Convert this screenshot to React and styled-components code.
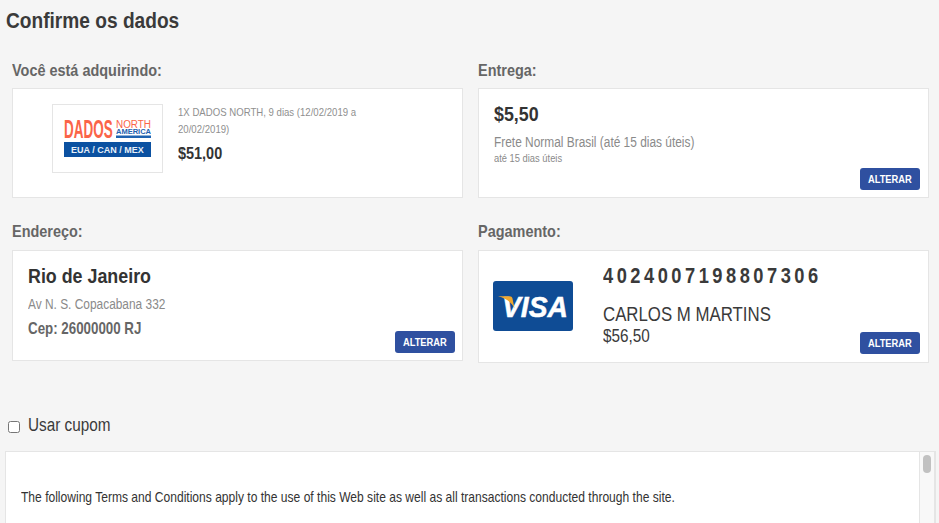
import styled, { createGlobalStyle, css } from "styled-components";

// the original condensed face is not installed, so Liberation Sans gets squeezed
const narrow = css`
    width: max-content;
    white-space: nowrap;
    transform: scaleX(0.85);
    transform-origin: 0 50%;
`

const GlobalStyle = createGlobalStyle`
    html, body {
        margin: 0;
        height: 100%;
        overflow: hidden;
        background: #f5f5f5;
    }

    body {
        font-family: "Liberation Sans", Arial, sans-serif;
        color: #333;
    }

    * {
        box-sizing: border-box;
    }
`

const Page = styled.div`
    height: 523px;
    overflow: hidden;
`

const TitleRow = styled.div`
    height: 53px;
    padding: 8px 0 0 6px;
`

const Title = styled.h1`
    ${narrow}
    margin: 0;
    font-size: 22.5px;
    line-height: 26px;
    font-weight: 700;
    color: #3a3a3a;
`

const Grid = styled.div`
    display: grid;
    grid-template-columns: 451px 451px;
    column-gap: 15px;
    align-items: start;
    padding-left: 12px;
`

const Section = styled.section`
    display: flex;
    flex-direction: column;
`

const LabelRow = styled.div`
    flex: none;
    height: ${props => props.$height}px;
    padding-top: ${props => props.$top}px;
`

const Label = styled.h2`
    ${narrow}
    margin: 0;
    font-size: 17px;
    line-height: 20px;
    font-weight: 700;
    color: #666;
`

const Card = styled.div`
    position: relative;
    flex: none;
    display: flex;
    height: ${props => props.$height}px;
    background: #fff;
    border: 1px solid #e5e5e5;
`

const ProductCard = styled(Card)`
    padding: 15px 0 0 39px;
`

const LogoBox = styled.div`
    flex: none;
    display: flex;
    align-items: center;
    justify-content: center;
    width: 111px;
    height: 69px;
    background: #fff;
    border: 1px solid #e5e5e5;
`

const ProductInfo = styled.div`
    width: 190px;
    margin-left: 15px;
`

const ProductName = styled.p`
    ${narrow}
    width: calc(100% / 0.85);
    white-space: normal;
    margin: 0;
    font-size: 11.3px;
    line-height: 17px;
    color: #8f8f8f;
`

const ProductPrice = styled.p`
    ${narrow}
    margin: 6px 0 0;
    font-size: 17px;
    line-height: 20px;
    font-weight: 700;
    color: #333;
`

const Details = styled.div`
    display: flex;
    flex-direction: column;
    padding: ${props => props.$top}px 0 0 15px;
`

const Heading = styled.h3`
    ${narrow}
    margin: 0;
    font-size: ${props => props.$size}px;
    line-height: 26px;
    font-weight: 700;
    color: #333;
`

const Muted = styled.p`
    ${narrow}
    margin: ${props => props.$top || 0}px 0 0;
    font-size: ${props => props.$size}px;
    line-height: ${props => props.$line}px;
    color: #8a8a8a;
`

const Zip = styled.p`
    ${narrow}
    margin: 6px 0 0;
    font-size: 15.7px;
    line-height: 20px;
    font-weight: 700;
    color: #666;
`

const ChangeButton = styled.button`
    position: absolute;
    right: ${props => props.$right || 8}px;
    bottom: ${props => props.$bottom || 7}px;
    display: flex;
    align-items: center;
    justify-content: center;
    width: 60px;
    height: 22px;
    padding: 0;
    border: 0;
    border-radius: 3px;
    background: #2f50a0;
    color: #fff;
    font-family: inherit;
    font-size: 11px;
    font-weight: 700;
`

const ChangeLabel = styled.span`
    ${narrow}
    transform-origin: 50% 50%;
`

const VisaCard = styled.div`
    flex: none;
    align-self: flex-start;
    width: 80px;
    height: 50px;
    margin: 30px 0 0 14px;
    border-radius: 3px;
    background: #0f4c95;
`

const PaymentInfo = styled.div`
    margin-left: 30px;
    padding-top: 12px;
`

const CardNumber = styled.p`
    ${narrow}
    margin: 0;
    font-size: 21.5px;
    line-height: 26px;
    font-weight: 700;
    letter-spacing: 4.12px;
    color: #3a3a3a;
`

const Holder = styled.p`
    ${narrow}
    margin: 14px 0 0;
    font-size: 19.8px;
    line-height: 22px;
    color: #3a3a3a;
`

const Amount = styled.p`
    ${narrow}
    margin: 1px 0 0;
    font-size: 18px;
    line-height: 21px;
    color: #3a3a3a;
`

const CouponRow = styled.label`
    display: flex;
    align-items: center;
    height: 26px;
    margin-top: 49px;
    padding-left: 8px;
    font-size: 18px;
    color: #3a3a3a;
`

const CouponText = styled.span`
    ${narrow}
`

const CouponCheck = styled.input`
    width: 12px;
    height: 12px;
    margin: 3px 8px 0 0;
`

const TermsBox = styled.div`
    display: flex;
    width: 931px;
    height: 120px;
    margin: 13px 0 0 5px;
    background: #fff;
    border: 1px solid #e5e5e5;
`

const TermsText = styled.div`
    flex: 1;
    padding: 35px 15px 0;
    overflow: hidden;
`

const TermsLine = styled.p`
    ${narrow}
    margin: 0;
    font-size: 14.2px;
    line-height: 20px;
    color: #333;
`

const TermsBar = styled.div`
    flex: none;
    width: 16px;
    padding: 3px 3px 0 3px;
    background: #f8f8f8;
    border-left: 1px solid #e5e5e5;
    border-right: 1px solid #e5e5e5;
`

const TermsThumb = styled.div`
    width: 8px;
    height: 18px;
    border-radius: 4px;
    background: #c1c1c1;
`

const DadosLogo = () => (
    <svg width="87" height="47" viewBox="0 -4 87 47" fontFamily="Liberation Sans, sans-serif">
        <text transform="translate(0 19) scale(0.54 1)" fontSize="25" fontWeight="700" fill="#fb6448">DADOS</text>
        <text transform="translate(52 8.5) scale(0.9 1)" fontSize="11" fill="#fb6448">NORTH</text>
        <text transform="translate(52 15) scale(0.94 1)" fontSize="8" fontWeight="700" fill="#1f62b0">AMERICA</text>
        <rect x="52" y="16.5" width="35" height="2.5" fill="#1f62b0" />
        <rect x="0" y="23" width="87" height="15" fill="#0b51a1" />
        <text x="7" y="34" fontSize="9" fontWeight="700" fill="#e8f0f8">EUA / CAN / MEX</text>
    </svg>
)

const VisaLogo = () => (
    <svg width="80" height="50" viewBox="0 0 80 50">
        <text x="9" y="36" fontFamily="Liberation Sans, sans-serif" fontSize="29" fontWeight="700" fontStyle="italic" stroke="#fff" strokeWidth="0.5" fill="#fff" textLength="66" lengthAdjust="spacingAndGlyphs">VISA</text>
        <path d="M5 15.3h11.5c1.6 0 2.6.8 3 2.2l2 10C19 21.5 13 17.3 5 15.3z" fill="#f0a830" />
    </svg>
)

const App = () => {
    return (
        <Page>
            <GlobalStyle />
            <TitleRow>
                <Title>Confirme os dados</Title>
            </TitleRow>
            <Grid>
                <Section>
                    <LabelRow $height="35" $top="8">
                        <Label>Você está adquirindo:</Label>
                    </LabelRow>
                    <ProductCard $height="110">
                        <LogoBox>
                            <DadosLogo />
                        </LogoBox>
                        <ProductInfo>
                            <ProductName>1X DADOS NORTH, 9 dias (12/02/2019 a 20/02/2019)</ProductName>
                            <ProductPrice>$51,00</ProductPrice>
                        </ProductInfo>
                    </ProductCard>
                </Section>
                <Section>
                    <LabelRow $height="35" $top="8">
                        <Label>Entrega:</Label>
                    </LabelRow>
                    <Card $height="110">
                        <Details $top="12">
                            <Heading $size="21">$5,50</Heading>
                            <Muted $size="14" $line="16" $top="7">Frete Normal Brasil (até 15 dias úteis)</Muted>
                            <Muted $size="11" $line="16">até 15 dias úteis</Muted>
                        </Details>
                        <ChangeButton><ChangeLabel>ALTERAR</ChangeLabel></ChangeButton>
                    </Card>
                </Section>
                <Section>
                    <LabelRow $height="52" $top="24">
                        <Label>Endereço:</Label>
                    </LabelRow>
                    <Card $height="111">
                        <Details $top="12">
                            <Heading $size="21">Rio de Janeiro</Heading>
                            <Muted $size="14" $line="18" $top="6">Av N. S. Copacabana 332</Muted>
                            <Zip>Cep: 26000000 RJ</Zip>
                        </Details>
                        <ChangeButton $right="7"><ChangeLabel>ALTERAR</ChangeLabel></ChangeButton>
                    </Card>
                </Section>
                <Section>
                    <LabelRow $height="52" $top="24">
                        <Label>Pagamento:</Label>
                    </LabelRow>
                    <Card $height="113">
                        <VisaCard>
                            <VisaLogo />
                        </VisaCard>
                        <PaymentInfo>
                            <CardNumber>4024007198807306</CardNumber>
                            <Holder>CARLOS M MARTINS</Holder>
                            <Amount>$56,50</Amount>
                        </PaymentInfo>
                        <ChangeButton $bottom="8"><ChangeLabel>ALTERAR</ChangeLabel></ChangeButton>
                    </Card>
                </Section>
            </Grid>
            <CouponRow>
                <CouponCheck type="checkbox" />
                <CouponText>Usar cupom</CouponText>
            </CouponRow>
            <TermsBox>
                <TermsText>
                    <TermsLine>The following Terms and Conditions apply to the use of this Web site as well as all transactions conducted through the site.</TermsLine>
                </TermsText>
                <TermsBar>
                    <TermsThumb />
                </TermsBar>
            </TermsBox>
        </Page>
    )
}

export default App;
